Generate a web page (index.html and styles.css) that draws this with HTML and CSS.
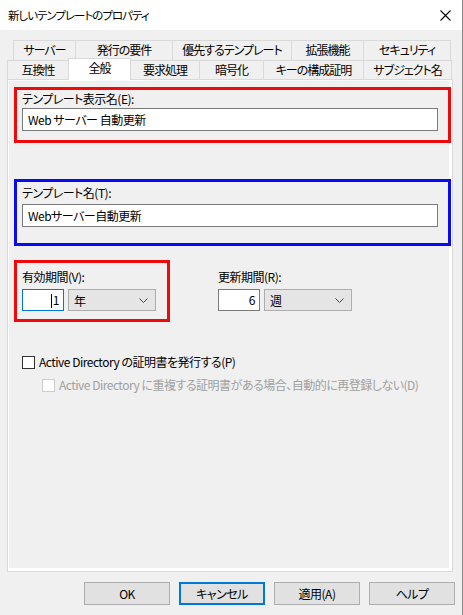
FILE: index.html
```html
<!DOCTYPE html>
<html lang="ja">
<head>
<meta charset="utf-8">
<title>新しいテンプレートのプロパティ</title>
<link rel="stylesheet" href="styles.css">
</head>
<body>
<div class="window">
  <div class="titlebar">
    <span class="title">新しいテンプレートのプロパティ</span>
    <svg class="close" width="11" height="11" viewBox="0 0 11 11"><path d="M0.5 0.5 L10.5 10.5 M10.5 0.5 L0.5 10.5" stroke="#000" stroke-width="1.1" fill="none"/></svg>
  </div>

  <div class="tabs">
    <div class="tabrow row1">
      <div class="tab w62">サーバー</div>
      <div class="tab w97">発行の要件</div>
      <div class="tab w119">優先するテンプレート</div>
      <div class="tab w72">拡張機能</div>
      <div class="tab w88 last">セキュリティ</div>
    </div>
    <div class="tabrow row2">
      <div class="tab w61">互換性</div>
      <div class="tab w63 selected">全般</div>
      <div class="tab w68">要求処理</div>
      <div class="tab w64">暗号化</div>
      <div class="tab w100">キーの構成証明</div>
      <div class="tab w89 last">サブジェクト名</div>
    </div>
  </div>

  <div class="panel">
    <div class="mark red box-display">
      <div class="label">テンプレート表示名(E):</div>
      <div class="textbox wide">Web サーバー 自動更新</div>
    </div>

    <div class="mark blue box-name">
      <div class="label">テンプレート名(T):</div>
      <div class="textbox wide">Webサーバー自動更新</div>
    </div>

    <div class="period-row">
      <div class="mark red box-valid">
        <div class="label">有効期間(V):</div>
        <div class="controls">
          <div class="textbox num focused"><span class="caret"></span>1</div>
          <div class="combo"><span>年</span><svg width="9" height="5" viewBox="0 0 9 5"><path d="M0.5 0.5 L4.5 4.5 L8.5 0.5" stroke="#444" fill="none"/></svg></div>
        </div>
      </div>
      <div class="renew">
        <div class="label">更新期間(R):</div>
        <div class="controls">
          <div class="textbox num">6</div>
          <div class="combo"><span>週</span><svg width="9" height="5" viewBox="0 0 9 5"><path d="M0.5 0.5 L4.5 4.5 L8.5 0.5" stroke="#444" fill="none"/></svg></div>
        </div>
      </div>
    </div>

    <div class="check check1">
      <span class="cbox"></span>
      <span>Active Directory の証明書を発行する(P)</span>
    </div>
    <div class="check check2 disabled">
      <span class="cbox"></span>
      <span>Active Directory に重複する証明書がある場合、自動的に再登録しない(D)</span>
    </div>
  </div>

  <div class="buttons">
    <div class="btn">OK</div>
    <div class="btn default">キャンセル</div>
    <div class="btn">適用(A)</div>
    <div class="btn">ヘルプ</div>
  </div>
</div>
</body>
</html>
```

FILE: styles.css
```css
* { box-sizing: border-box; }

html, body {
  margin: 0;
  padding: 0;
}

body {
  font-family: "Noto Sans CJK JP", "Noto Sans", sans-serif;
  font-size: 12px;
  font-feature-settings: "palt" 1;
  letter-spacing: -0.5px;
  color: #000;
  background: #f0f0f0;
}

.window {
  width: 463px;
  height: 615px;
  background: #f0f0f0;
  border-right: 1px solid #8a8a8a;
  display: flex;
  flex-direction: column;
}

.titlebar {
  height: 30px;
  background: #fff;
  display: flex;
  align-items: center;
  justify-content: space-between;
  padding: 0 11px 0 8px;
  flex: none;
}

.title {
  font-size: 11.5px;
  line-height: 16px;
  letter-spacing: -1px;
}

.close { display: block; }

/* Tabs */
.tabs {
  margin-top: 10px;
  flex: none;
}

.tabrow {
  display: flex;
  align-items: flex-end;
}

.row1 {
  padding-left: 13px;
  height: 20px;
}

.row2 {
  padding-left: 7px;
  height: 19px;
  position: relative;
  z-index: 2;
}

.tab {
  height: 100%;
  border-top: 1px solid #d9d9d9;
  border-left: 1px solid #d9d9d9;
  background: #f0f0f0;
  text-align: center;
  line-height: 18px;
  font-size: 12px;
  letter-spacing: -1px;
  white-space: nowrap;
}

.tab.last { border-right: 1px solid #d9d9d9; }

.tab.selected {
  height: 22px;
  margin-bottom: -1px;
  background: #fff;
  border: 1px solid #d9d9d9;
  border-bottom: none;
  line-height: 17px;
  position: relative;
  z-index: 3;
}

.tab.selected + .tab { border-left: none; }

.w61 { width: 61px; }
.w62 { width: 62px; }
.w63 { width: 63px; }
.w64 { width: 64px; }
.w68 { width: 68px; }
.w72 { width: 72px; }
.w88 { width: 88px; }
.w89 { width: 89px; }
.w97 { width: 97px; }
.w100 { width: 100px; }
.w119 { width: 119px; }

/* Panel */
.panel {
  margin-left: 7px;
  width: 446px;
  height: 493px;
  border: 1px solid #d9d9d9;
  box-shadow: inset 0 0 0 1px #fff, inset -1px -1px 0 2px #fff;
  background: #f0f0f0;
  flex: none;
  position: relative;
  z-index: 1;
}

.label {
  line-height: 16px;
  height: 16px;
  font-size: 12px;
  white-space: nowrap;
}

.mark {
  border: 3px solid;
  margin-left: 6px;
}

.red { border-color: #ee0a0a; }
.blue { border-color: #0a0af0; }

.box-display {
  margin-top: 7px;
  width: 437px;
  height: 56px;
  padding: 1px 0 0 5px;
}

.box-display .label { margin-bottom: 1px; }

.box-name {
  margin-top: 36px;
  width: 437px;
  height: 67px;
  padding: 3px 0 0 5px;
}

.box-name .label { margin-bottom: 3px; }

.textbox {
  background: #fff;
  border: 1px solid #7a7a7a;
  height: 23px;
  line-height: 21px;
  padding: 0 5px;
  font-size: 12px;
  white-space: nowrap;
}

.textbox.wide { width: 416px; }

.period-row {
  display: flex;
  margin-top: 14px;
}

.box-valid {
  width: 156px;
  height: 62px;
  padding: 6px 0 0 5px;
  flex: none;
}

.renew {
  margin-left: 48px;
  padding-top: 9px;
}

.period-row .label { margin-bottom: 4px; }

.controls {
  display: flex;
  gap: 4px;
}

.textbox.num {
  width: 42px;
  height: 22px;
  line-height: 20px;
  text-align: right;
  padding: 0 4px;
}

.textbox.focused { border-color: #0078d7; }

.caret {
  display: inline-block;
  width: 1px;
  height: 14px;
  background: #000;
  vertical-align: -3px;
  margin-right: 1px;
}

.combo {
  width: 88px;
  height: 22px;
  background: #e5e5e5;
  border: 1px solid #adadad;
  display: flex;
  align-items: center;
  justify-content: space-between;
  padding: 0 7px 0 5px;
  font-size: 12px;
}

.combo svg { display: block; }

/* Checkboxes */
.check {
  display: flex;
  align-items: center;
  gap: 4px;
  height: 16px;
  line-height: 16px;
  white-space: nowrap;
}

.check1 {
  margin-top: 32px;
  margin-left: 14px;
}

.check2 {
  margin-top: 7px;
  margin-left: 34px;
}

.cbox {
  width: 13px;
  height: 13px;
  border: 1px solid #333;
  background: #fff;
  flex: none;
}

.disabled { color: #a0a0a0; }
.disabled .cbox { border-color: #cccccc; background: #fff; }

/* Buttons */
.buttons {
  display: flex;
  justify-content: flex-end;
  gap: 9px;
  padding-right: 7px;
  margin-top: 10px;
}

.btn {
  width: 86px;
  height: 23px;
  background: #e1e1e1;
  border: 1px solid #adadad;
  text-align: center;
  line-height: 21px;
  font-size: 12px;
}

.btn.default {
  border: 2px solid #0078d7;
  line-height: 19px;
}
```
